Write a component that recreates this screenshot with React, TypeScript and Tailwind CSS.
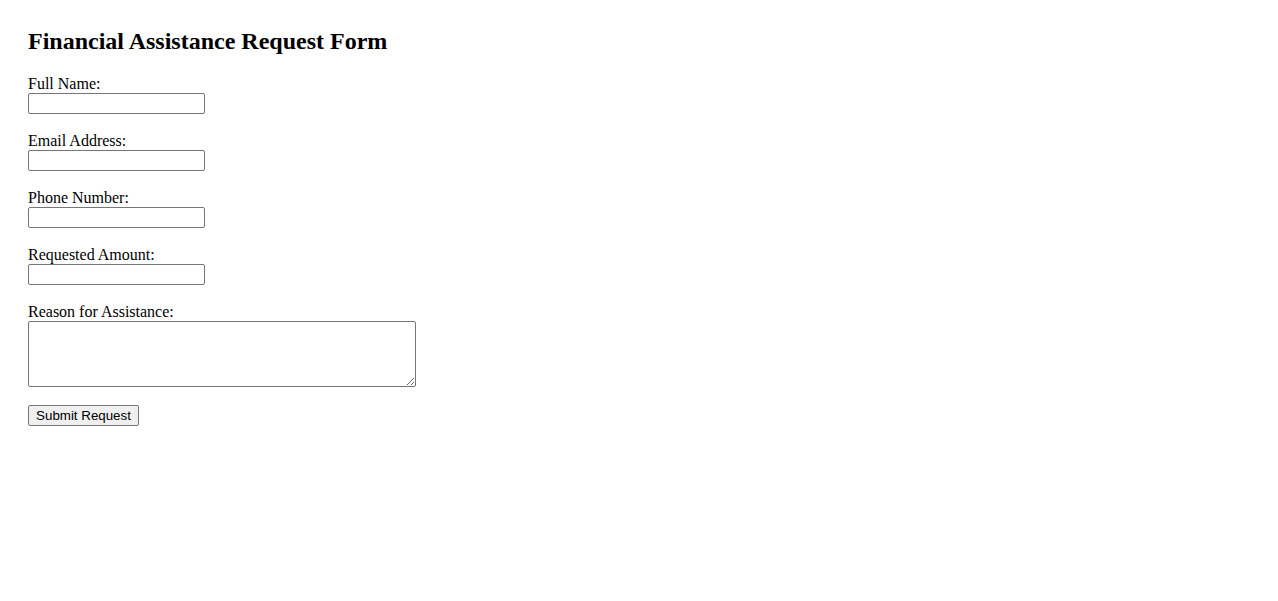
import React from "react";

const fields = [
  { id: "fullName", label: "Full Name:", type: "text" },
  { id: "email", label: "Email Address:", type: "email" },
  { id: "phone", label: "Phone Number:", type: "tel" },
  { id: "amount", label: "Requested Amount:", type: "number" },
];

export default function App() {
  return (
    <div
      className="min-h-screen bg-white p-[28px] text-black"
      style={{ fontFamily: '"Liberation Serif", "Times New Roman", serif' }}
    >
      <h2 className="m-0 mb-[19px] text-[24px] font-bold leading-[27.6px]">
        Financial Assistance Request Form
      </h2>
      <form onSubmit={(e) => e.preventDefault()}>
        {fields.map((f) => (
          <div key={f.id} className="mb-[17.6px]">
            <label htmlFor={f.id} className="block text-[16px] leading-[18.4px]">
              {f.label}
            </label>
            <input
              id={f.id}
              type={f.type}
              className="block h-[21px] w-[177px] rounded-[2px] border border-[#767676] bg-white px-[2px] text-[13.33px] outline-none [appearance:textfield]"
            />
          </div>
        ))}
        <div className="mb-[18px]">
          <label htmlFor="reason" className="block text-[16px] leading-[18.4px]">
            Reason for Assistance:
          </label>
          <textarea
            id="reason"
            className="block h-[66px] w-[388px] resize rounded-[2px] border border-[#767676] bg-white p-[2px] text-[13.33px] outline-none"
          />
        </div>
        <button
          type="submit"
          className="block h-[21px] w-[111px] rounded-[2px] border border-[#767676] bg-[#efefef] px-[6px] text-[13.33px] leading-none text-black"
          style={{ fontFamily: '"Liberation Sans", Arial, sans-serif' }}
        >
          Submit Request
        </button>
      </form>
    </div>
  );
}
